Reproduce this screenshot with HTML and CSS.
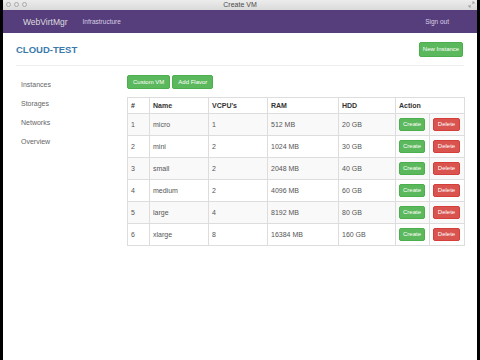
FILE: index.html
```html
<!DOCTYPE html>
<html lang="en">
<head>
  <meta charset="UTF-8">
  <meta name="viewport" content="width=device-width, initial-scale=1.0">
  <title>Create VM</title>
  <link rel="stylesheet" href="styles.css">
</head>
<body>
  <div class="window">
    <!-- Window title bar -->
    <div class="titlebar">
      <div class="lights">
        <span class="light"></span>
        <span class="light"></span>
        <span class="light"></span>
      </div>
      <span class="title">Create VM</span>
      <svg class="resize" width="7" height="7" viewBox="0 0 7 7">
        <path d="M4 1h2v2M6 1L4.2 2.8M1 4v2h2M1 6l1.8-1.8" fill="none" stroke="#999" stroke-width="0.8"/>
      </svg>
    </div>

    <!-- Navbar -->
    <div class="navbar">
      <a href="#" class="brand">WebVirtMgr</a>
      <a href="#" class="nav-link">Infrastructure</a>
      <a href="#" class="nav-link signout">Sign out</a>
    </div>

    <div class="container">
      <div class="page-header">
        <h2 class="host-name">CLOUD-TEST</h2>
        <a href="#" class="btn btn-success btn-new">New Instance</a>
      </div>

      <div class="layout">
        <ul class="sidebar">
          <li><a href="#">Instances</a></li>
          <li><a href="#">Storages</a></li>
          <li><a href="#">Networks</a></li>
          <li><a href="#">Overview</a></li>
        </ul>

        <div class="main">
          <div class="toolbar">
            <a href="#" class="btn btn-success">Custom VM</a>
            <a href="#" class="btn btn-success">Add Flavor</a>
          </div>

          <table class="flavors">
            <colgroup>
              <col class="col-id">
              <col class="col-name">
              <col class="col-vcpu">
              <col class="col-ram">
              <col class="col-hdd">
              <col class="col-create">
              <col class="col-delete">
            </colgroup>
            <thead>
              <tr>
                <th>#</th>
                <th>Name</th>
                <th>VCPU's</th>
                <th>RAM</th>
                <th>HDD</th>
                <th colspan="2">Action</th>
              </tr>
            </thead>
            <tbody id="flavorRows"></tbody>
          </table>
        </div>
      </div>
    </div>
  </div>

  <script>
    // Flavor list
    const flavors = [
      ['micro', 1, 512, 20],
      ['mini', 2, 1024, 30],
      ['small', 2, 2048, 40],
      ['medium', 2, 4096, 60],
      ['large', 4, 8192, 80],
      ['xlarge', 8, 16384, 160]
    ];

    const rows = document.getElementById('flavorRows');
    flavors.forEach((f, i) => {
      const tr = document.createElement('tr');
      tr.innerHTML =
        '<td>' + (i + 1) + '</td>' +
        '<td>' + f[0] + '</td>' +
        '<td>' + f[1] + '</td>' +
        '<td>' + f[2] + ' MB</td>' +
        '<td>' + f[3] + ' GB</td>' +
        '<td><a href="#" class="btn btn-success btn-sm">Create</a></td>' +
        '<td><a href="#" class="btn btn-danger btn-sm">Delete</a></td>';
      rows.appendChild(tr);
    });
  </script>
</body>
</html>
```

FILE: styles.css
```css
html, body {
  margin: 0;
  padding: 0;
  background-color: #000;
  height: 100%;
}

body {
  font-family: "Liberation Sans", Arial, sans-serif;
  color: #555;
}

a {
  text-decoration: none;
}

.window {
  margin: 0 3px;
  height: 100%;
  background-color: #fff;
}

/* Title bar */
.titlebar {
  height: 10px;
  display: flex;
  align-items: center;
  justify-content: center;
  position: relative;
  background: linear-gradient(#ececec, #dadada);
}

.lights {
  position: absolute;
  left: 3px;
  top: 2px;
  display: flex;
  gap: 3px;
}

.light {
  width: 5px;
  height: 5px;
  border-radius: 50%;
  border: 0.8px solid #a9a9a9;
  background-color: #e6e6e6;
  box-sizing: border-box;
}

.title {
  font-size: 7px;
  color: #4a4a4a;
  line-height: 10px;
}

.resize {
  position: absolute;
  right: 2px;
  top: 1px;
}

/* Navbar */
.navbar {
  height: 23px;
  background-color: #563d7c;
  display: flex;
  align-items: center;
  padding: 0 28px 0 20px;
}

.brand {
  font-size: 8.5px;
  color: #ddd;
  margin-right: 15px;
}

.nav-link {
  font-size: 6.5px;
  color: #d8d0e4;
}

.signout {
  margin-left: auto;
}

/* Content */
.container {
  padding: 0 13px;
}

.page-header {
  display: flex;
  align-items: center;
  justify-content: space-between;
  padding: 9px 1px 8px 0;
  border-bottom: 1px solid #eee;
}

.host-name {
  margin: 0;
  font-size: 9.5px;
  font-weight: bold;
  color: #3a7aaa;
}

.btn {
  display: inline-block;
  font-size: 6px;
  color: #fff;
  text-align: center;
  border-radius: 2px;
  box-sizing: border-box;
}

.btn-success {
  background-color: #5cb85c;
  border: 1px solid #4cae4c;
}

.btn-danger {
  background-color: #d9534f;
  border: 1px solid #d43f3a;
}

.btn-new {
  width: 44px;
  height: 15px;
  line-height: 13px;
}

.layout {
  display: flex;
  padding-top: 9px;
}

.sidebar {
  list-style: none;
  margin: 0;
  padding: 0;
  width: 111px;
}

.sidebar li a {
  display: block;
  height: 19px;
  line-height: 19px;
  padding-left: 5px;
  font-size: 7px;
  color: #666;
}

.main {
  width: 337px;
}

.toolbar {
  display: flex;
  gap: 2px;
  margin-bottom: 8px;
}

.toolbar .btn {
  height: 14px;
  line-height: 12px;
  padding: 0 5px;
}

/* Flavor table */
.flavors {
  width: 337px;
  border-collapse: collapse;
  table-layout: fixed;
  font-size: 7px;
  border: 1px solid #ddd;
}

.col-id { width: 22px; }
.col-name { width: 59px; }
.col-vcpu { width: 59px; }
.col-ram { width: 71px; }
.col-hdd { width: 57px; }
.col-create { width: 34px; }
.col-delete { width: 35px; }

.flavors th,
.flavors td {
  border: 1px solid #ddd;
  text-align: left;
  padding: 0 3px;
  white-space: nowrap;
  overflow: hidden;
}

.flavors th {
  height: 15px;
  font-weight: bold;
  color: #333;
}

.flavors td {
  height: 21px;
  color: #555;
}

.flavors tbody tr:nth-child(odd) {
  background-color: #f9f9f9;
}

.btn-sm {
  width: 26px;
  height: 13px;
  line-height: 11px;
  vertical-align: middle;
}

.btn-danger.btn-sm {
  width: 27px;
}
```
